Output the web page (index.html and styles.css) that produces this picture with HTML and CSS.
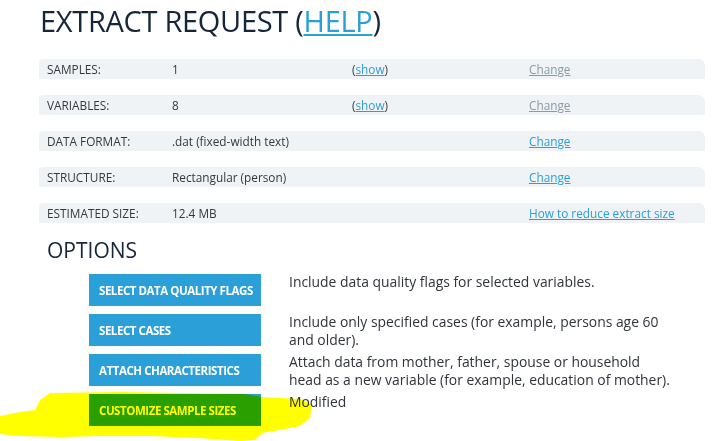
FILE: index.html
```html
<!DOCTYPE html>
<html>
<head>
<meta charset="utf-8">
<link rel="stylesheet" href="styles.css">
</head>
<body>
<div class="page">
  <h1 class="title">EXTRACT REQUEST (<a href="#" class="link">HELP</a>)</h1>
  <div class="summary">
    <div class="row">
      <span class="label">SAMPLES:</span>
      <span class="value">1</span>
      <span class="extra">(<a href="#" class="link">show</a>)</span>
      <span class="action"><a href="#" class="link visited">Change</a></span>
    </div>
    <div class="row">
      <span class="label">VARIABLES:</span>
      <span class="value">8</span>
      <span class="extra">(<a href="#" class="link">show</a>)</span>
      <span class="action"><a href="#" class="link visited">Change</a></span>
    </div>
    <div class="row">
      <span class="label">DATA FORMAT:</span>
      <span class="value">.dat (fixed-width text)</span>
      <span class="extra"></span>
      <span class="action"><a href="#" class="link">Change</a></span>
    </div>
    <div class="row">
      <span class="label">STRUCTURE:</span>
      <span class="value">Rectangular (person)</span>
      <span class="extra"></span>
      <span class="action"><a href="#" class="link">Change</a></span>
    </div>
    <div class="row">
      <span class="label">ESTIMATED SIZE:</span>
      <span class="value">12.4 MB</span>
      <span class="extra"></span>
      <span class="action"><a href="#" class="link">How to reduce extract size</a></span>
    </div>
  </div>
  <h2 class="subtitle">OPTIONS</h2>
  <div class="options">
    <div class="option">
      <button class="btn">SELECT DATA QUALITY FLAGS</button>
      <p class="desc">Include data quality flags for selected variables.</p>
    </div>
    <div class="option">
      <button class="btn">SELECT CASES</button>
      <p class="desc">Include only specified cases (for example, persons age 60 and older).</p>
    </div>
    <div class="option">
      <button class="btn">ATTACH CHARACTERISTICS</button>
      <p class="desc">Attach data from mother, father, spouse or household head as a new variable (for example, education of mother).</p>
    </div>
    <div class="option">
      <button class="btn">CUSTOMIZE SAMPLE SIZES</button>
      <p class="desc">Modified</p>
    </div>
  </div>
</div>
<svg class="highlight" width="723" height="441" viewBox="0 0 723 441">
  <path d="M50 393 L120 392 L245 394 L262 397 L300 399 L312 404 L310 418 L300 426 L280 430 L262 433 L255 440 L240 441 L200 438 L150 436 L100 436 L60 437 L20 436 L0 434 L0 416 L20 412 L35 410 L40 400 Z" fill="#ffff00"/>
</svg>
</body>
</html>
```
FILE: styles.css
```css
html, body {
  margin: 0;
  padding: 0;
  background: #ffffff;
}
body {
  font-family: "Open Sans", "DejaVu Sans", sans-serif;
  color: #2b2f36;
  width: 723px;
  height: 441px;
  overflow: hidden;
  position: relative;
}
.page {
  padding: 0 18px 0 39px;
}
.link {
  color: #2a9fd8;
  text-decoration: underline;
}
.link.visited {
  color: #8a9aa6;
}
.title {
  margin: 0;
  padding-top: 3px;
  padding-left: 1px;
  font-size: 29px;
  font-weight: 400;
  line-height: 36px;
  color: #15253a;
  letter-spacing: -0.3px;
}
.summary {
  margin-top: 20px;
  display: flex;
  flex-direction: column;
  gap: 16px;
  width: 666px;
}
.row {
  display: grid;
  grid-template-columns: 125px 180px 177px 1fr;
  align-items: center;
  height: 20px;
  padding-left: 8px;
  background: #f0f3f6;
  border-radius: 4px 7px 0 0;
  font-size: 11.8px;
  color: #333840;
}
.subtitle {
  margin: 13px 0 0 8px;
  font-size: 21px;
  font-weight: 400;
  line-height: 28px;
  color: #15253a;
}
.options {
  margin-top: 10px;
  padding-left: 50px;
  display: flex;
  flex-direction: column;
  gap: 8px;
}
.option {
  display: flex;
  align-items: flex-start;
  gap: 28px;
  height: 32px;
}
.btn {
  flex: none;
  width: 172px;
  height: 32px;
  border: none;
  margin: 0;
  padding: 0 0 0 10px;
  text-align: left;
  background: #2a9fd8;
  color: #ffffff;
  font-family: "Open Sans", sans-serif;
  font-weight: 700;
  font-size: 11.5px;
  letter-spacing: -0.45px;
}
.desc {
  margin: -1px 0 0 0;
  width: 385px;
  font-size: 13.9px;
  line-height: 18px;
  color: #2f333a;
}
.highlight {
  position: absolute;
  left: 0;
  top: 0;
  mix-blend-mode: multiply;
  pointer-events: none;
}
```
